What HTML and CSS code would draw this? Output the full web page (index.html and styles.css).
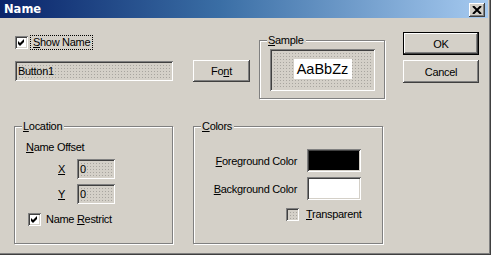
FILE: index.html
```html
<!DOCTYPE html>
<html>
<head>
<meta charset="utf-8">
<link rel="stylesheet" href="styles.css">
</head>
<body>
<div class="window">
  <div class="titlebar">
    <span class="title">Name</span>
    <span class="close raised">
      <svg width="10" height="8" viewBox="0 0 10 8"><path d="M1 0 L9 8 M9 0 L1 8" stroke="#000" stroke-width="2" fill="none"/></svg>
    </span>
  </div>
  <div class="top">
    <div class="left">
      <div class="check-row">
        <span class="checkbox"><svg width="9" height="9" viewBox="0 0 9 9"><path d="M1 3 L3 5 L7 1 L7 4 L3 8 L1 6 Z" fill="#000"/></svg></span>
        <span class="check-label focus"><u>S</u>how Name</span>
      </div>
      <div class="field-row">
        <div class="field name-field">Button1</div>
        <div class="btn raised font-btn">Fo<u>n</u>t</div>
      </div>
    </div>
    <div class="group sample">
      <span class="legend"><u>S</u>ample</span>
      <div class="sunken sample-box">
        <div class="sample-text">AaBbZz</div>
      </div>
    </div>
    <div class="buttons">
      <div class="default-wrap"><div class="btn raised ok-btn">OK</div></div>
      <div class="btn raised cancel-btn">Cancel</div>
    </div>
  </div>
  <div class="bottom">
    <div class="group location">
      <span class="legend"><u>L</u>ocation</span>
      <div class="offset-label"><u>N</u>ame Offset</div>
      <div class="coord-row">
        <span class="coord-label"><u>X</u></span>
        <div class="field coord-field">0</div>
      </div>
      <div class="coord-row coord-y">
        <span class="coord-label"><u>Y</u></span>
        <div class="field coord-field">0</div>
      </div>
      <div class="check-row restrict">
        <span class="checkbox"><svg width="9" height="9" viewBox="0 0 9 9"><path d="M1 3 L3 5 L7 1 L7 4 L3 8 L1 6 Z" fill="#000"/></svg></span>
        <span class="check-label">Name <u>R</u>estrict</span>
      </div>
    </div>
    <div class="group colors">
      <span class="legend"><u>C</u>olors</span>
      <div class="color-grid">
        <span class="color-label"><u>F</u>oreground Color</span>
        <div class="swatch sunken swatch-black"></div>
        <span class="color-label"><u>B</u>ackground Color</span>
        <div class="swatch sunken swatch-white"></div>
      </div>
      <div class="check-row transparent">
        <span class="checkbox disabled"></span>
        <span class="check-label"><u>T</u>ransparent</span>
      </div>
    </div>
  </div>
</div>
</body>
</html>
```
FILE: styles.css
```css
html, body {
  margin: 0;
  padding: 0;
  background: #d4d0c8;
}
body {
  font-family: "Liberation Sans", Arial, sans-serif;
  font-size: 11px;
  letter-spacing: -0.3px;
  color: #000;
}
u { text-decoration: underline; text-underline-offset: 1px; }

.window {
  width: 491px;
  height: 255px;
  box-sizing: border-box;
  background: #d4d0c8;
  box-shadow: inset -1px -1px #404040, inset -2px -2px #808080;
  overflow: hidden;
}

.titlebar {
  width: 488px;
  height: 18px;
  background: linear-gradient(to right, #0a246a 0%, #3a6ea5 45%, #a6caf0 100%);
  display: flex;
  justify-content: space-between;
  align-items: flex-start;
  box-sizing: border-box;
  padding: 0 3px 0 4px;
}
.title {
  color: #fff;
  font-weight: bold;
  letter-spacing: 0;
  line-height: 18px;
  font-family: "DejaVu Sans", "Liberation Sans", sans-serif;
  font-size: 11.5px;
}
.close {
  width: 16px;
  height: 14px;
  margin-top: 3px;
  display: flex;
  align-items: center;
  justify-content: center;
  background: #d4d0c8;
}

.raised {
  background: #d4d0c8;
  box-shadow: inset -1px -1px #404040, inset 1px 1px #fff, inset -2px -2px #808080, inset 2px 2px #d4d0c8;
}
.sunken {
  box-shadow: inset 1px 1px #808080, inset -1px -1px #fff, inset 2px 2px #404040, inset -2px -2px #d4d0c8;
}
.dotted-bg {
  background: #d4d0c8;
}

.top {
  display: flex;
  align-items: flex-start;
  margin-top: 14px;
  height: 67px;
}
.left {
  margin-left: 15px;
  width: 235px;
  padding-top: 4px;
}
.check-row {
  display: flex;
  align-items: center;
  height: 13px;
}
.checkbox {
  width: 13px;
  height: 13px;
  box-sizing: border-box;
  background: #fff;
  box-shadow: inset 1px 1px #808080, inset -1px -1px #fff, inset 2px 2px #404040, inset -2px -2px #d4d0c8;
  display: flex;
  align-items: center;
  justify-content: center;
  flex: none;
}
.checkbox.disabled {
  background: #d4d0c8 radial-gradient(circle, #a8a59f 0.7px, transparent 0.9px) 0 0 / 3px 3px;
}
.check-label {
  margin-left: 5px;
  line-height: 13px;
  white-space: nowrap;
}
.focus {
  margin-left: 3px;
  padding: 0 2px;
  outline: 1px dotted #000;
  outline-offset: 0;
}

.field-row {
  display: flex;
  align-items: center;
  margin-top: 11px;
  gap: 20px;
}
.field {
  box-sizing: border-box;
  height: 20px;
  background: #d4d0c8 radial-gradient(circle, #a8a59f 0.7px, transparent 0.9px) 0 0 / 3px 3px;
  box-shadow: inset 1px 1px #808080, inset -1px -1px #fff, inset 2px 2px #404040, inset -2px -2px #d4d0c8;
  padding-left: 3px;
  line-height: 20px;
}
.name-field { width: 158px; }
.btn {
  box-sizing: border-box;
  display: flex;
  align-items: center;
  justify-content: center;
  height: 23px;
}
.font-btn { width: 57px; height: 22px; }

.group {
  position: relative;
  box-sizing: border-box;
  border: 1px solid #808080;
  box-shadow: inset 1px 1px #fff, 1px 1px #fff;
}
.legend {
  position: absolute;
  left: 7px;
  top: -7px;
  padding: 0 2px 0 1px;
  background: #d4d0c8;
  line-height: 13px;
}

.sample {
  margin-left: 9px;
  margin-top: 8px;
  width: 126px;
  height: 59px;
  padding: 8px 0 0 10px;
}
.sample-box {
  width: 105px;
  height: 42px;
  box-sizing: border-box;
  background: #d4d0c8 radial-gradient(circle, #a8a59f 0.7px, transparent 0.9px) 0 0 / 3px 3px;
  display: flex;
  align-items: center;
  justify-content: center;
}
.sample-text {
  background: #fff;
  width: 58px;
  height: 20px;
  line-height: 20px;
  text-align: center;
  font-size: 14.5px;
  letter-spacing: 0;
  margin-top: -2px;
}

.buttons {
  margin-left: 18px;
  width: 76px;
  display: flex;
  flex-direction: column;
  gap: 5px;
}
.default-wrap {
  border: 1px solid #000;
  height: 23px;
  box-sizing: border-box;
}
.ok-btn { height: 21px; }

.bottom {
  display: flex;
  align-items: flex-start;
  margin-top: 27px;
}
.location {
  margin-left: 14px;
  width: 159px;
  height: 118px;
  padding: 14px 0 0 11px;
}
.offset-label {
  line-height: 13px;
}
.coord-row {
  display: flex;
  align-items: center;
  margin-top: 5px;
  margin-left: 32px;
}
.coord-label {
  width: 19px;
}
.coord-field {
  width: 38px;
}
.restrict {
  margin-top: 9px;
  margin-left: 2px;
}

.colors {
  margin-left: 20px;
  width: 190px;
  height: 118px;
  padding-top: 22px;
}
.color-grid {
  display: grid;
  grid-template-columns: 103px 54px;
  column-gap: 10px;
  row-gap: 5px;
  align-items: center;
}
.color-label {
  text-align: right;
  white-space: nowrap;
}
.swatch {
  height: 23px;
  box-sizing: border-box;
}
.swatch-black { background: #000; }
.swatch-white { background: #fff; }
.transparent {
  margin-top: 8px;
  margin-left: 92px;
}
.transparent .check-label { margin-left: 7px; }
```
